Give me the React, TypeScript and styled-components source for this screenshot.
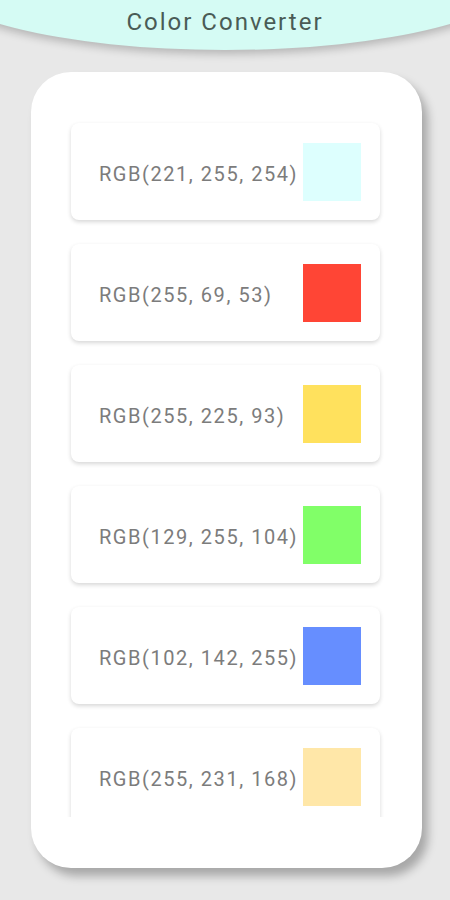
import React from 'react';
import styled, { createGlobalStyle } from 'styled-components';

const Global = createGlobalStyle`
  html, body { margin: 0; padding: 0; }
  body {
    background: #e8e8e8;
    font-family: Roboto, "Noto Sans", "Liberation Sans", sans-serif;
  }
`;

const Page = styled.div`
  width: 450px;
  height: 900px;
  overflow: hidden;
  position: relative;
`;

const Header = styled.div`
  position: relative;
  height: 50px;
  &::before {
    content: '';
    position: absolute;
    left: -75px;
    top: -104px;
    width: 600px;
    height: 154px;
    border-radius: 50%;
    background: #d5fbf4;
    box-shadow: 0 4px 9px rgba(0, 0, 0, 0.22);
  }
`;

const Title = styled.h1`
  position: relative;
  margin: 0;
  text-align: center;
  font-size: 24px;
  font-weight: 400;
  letter-spacing: 2px;
  line-height: 44px;
  color: #4a5b56;
`;

const Panel = styled.div`
  margin: 22px 0 0 31px;
  width: 391px;
  height: 796px;
  box-sizing: border-box;
  padding-top: 41px;
  background: #fff;
  border-radius: 40px;
  box-shadow: 6px 8px 10px rgba(0, 0, 0, 0.28);
`;

const List = styled.div`
  height: 704px;
  box-sizing: border-box;
  overflow: hidden;
  padding: 10px 0 0 40px;
  display: flex;
  flex-direction: column;
  gap: 24px;
`;

const Card = styled.div`
  flex-shrink: 0;
  width: 309px;
  height: 97px;
  box-sizing: border-box;
  padding: 0 19px 0 28px;
  display: flex;
  align-items: center;
  justify-content: space-between;
  background: #fff;
  border-radius: 8px;
  box-shadow: 0 2px 4px rgba(0, 0, 0, 0.16);
`;

const Label = styled.span`
  font-size: 20px;
  letter-spacing: 1.55px;
  margin-top: 4px;
  color: #7c7c7c;
  white-space: nowrap;
`;

const Swatch = styled.div<{ $c: string }>`
  width: 58px;
  height: 58px;
  flex-shrink: 0;
  background: ${(p) => p.$c};
`;

const colors: [number, number, number][] = [
  [221, 255, 254],
  [255, 69, 53],
  [255, 225, 93],
  [129, 255, 104],
  [102, 142, 255],
  [255, 231, 168],
];

export default function App() {
  return (
    <Page>
      <Global />
      <Header>
        <Title>Color Converter</Title>
      </Header>
      <Panel>
        <List>
          {colors.map(([r, g, b]) => (
            <Card key={`${r}-${g}-${b}`}>
              <Label>{`RGB(${r}, ${g}, ${b})`}</Label>
              <Swatch $c={`rgb(${r}, ${g}, ${b})`} />
            </Card>
          ))}
        </List>
      </Panel>
    </Page>
  );
}
